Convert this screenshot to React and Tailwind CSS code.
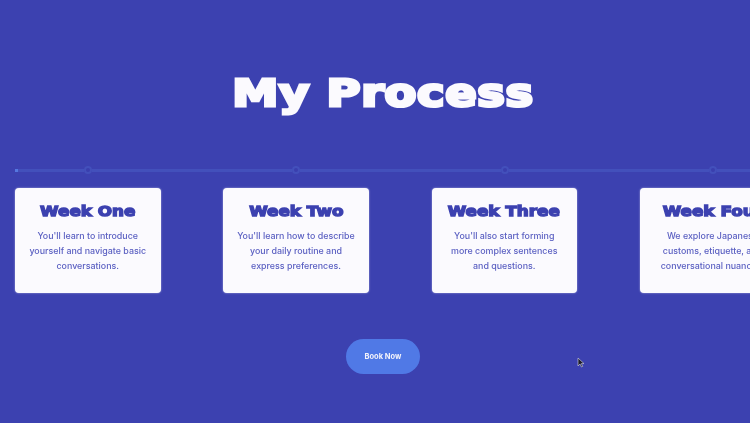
const weeks = [
  { title: 'Week One', lines: ["You'll learn to introduce", 'yourself and navigate basic', 'conversations.'] },
  { title: 'Week Two', lines: ["You'll learn how to describe", 'your daily routine and', 'express preferences.'] },
  { title: 'Week Three', lines: ["You'll also start forming", 'more complex sentences', 'and questions.'] },
  { title: 'Week Four', lines: ['We explore Japanese', 'customs, etiquette, and', 'conversational nuances.'] },
];

const Segment = () => <div className="h-[3px] flex-1 bg-[#4350bb]" />;

const Step = ({ week, first }) => (
  <div className="flex w-[208.25px] shrink-0 flex-col">
    <div className="flex h-[8px] items-center">
      <div className="flex w-[69px] shrink-0 items-center">
        {first && <div className="h-[3px] w-[3px] shrink-0 bg-[#5577e0]" />}
        <Segment />
      </div>
      <div className="h-[8px] w-[8px] shrink-0 rounded-full border-2 border-[#4350bb] bg-[#3a3fae]" />
      <Segment />
    </div>
    <div className="mt-[14px] flex h-[105px] w-[145.5px] flex-col items-center rounded-[4px] bg-[#fbfafe] pt-[14px] shadow-[0_0_2px_rgba(255,255,255,0.6)]">
      <h3 className="scale-x-[1.2] whitespace-nowrap font-['DejaVu_Sans',sans-serif] text-[14px] font-bold leading-[18px] text-[#3c41b0] [-webkit-text-stroke:1.3px_#3c41b0]">
        {week.title}
      </h3>
      <p className="mt-[8px] whitespace-nowrap text-center font-['Inter',sans-serif] text-[8.9px] font-medium leading-[15px] text-[#5b60c2]">
        {week.lines.map((line) => (
          <span key={line} className="block">{line}</span>
        ))}
      </p>
    </div>
  </div>
);

export default function App() {
  return (
    <div className="relative flex h-[423px] w-[750px] flex-col overflow-hidden bg-[#3c41b0] blur-[0.35px]">
      <h1 className="mt-[68px] scale-x-[1.22] pl-[13px] text-center font-['DejaVu_Sans',sans-serif] text-[38px] font-bold leading-[50px] tracking-[0.5px] text-[#fbfafe] [-webkit-text-stroke:3px_#fbfafe]">
        My Process
      </h1>
      <div className="mt-[48px] flex pl-[15px]">
        {weeks.map((week, i) => (
          <Step key={week.title} week={week} first={i === 0} />
        ))}
      </div>
      <div className="mt-[46px] flex justify-center pl-[16px]">
        <button className="h-[35px] w-[74px] rounded-full bg-[#5079e6] font-['Inter',sans-serif] text-[7.5px] font-bold text-[#f3f3fb]">
          Book Now
        </button>
      </div>
      <svg className="absolute left-[577px] top-[357px]" width="8" height="11" viewBox="0 0 8 11">
        <path d="M1 1v8l2-2 1.5 3 1.2-.6L4.3 6.6H7z" fill="#1d1d2a" stroke="#d8d8e8" strokeWidth="0.6" />
      </svg>
    </div>
  );
}
